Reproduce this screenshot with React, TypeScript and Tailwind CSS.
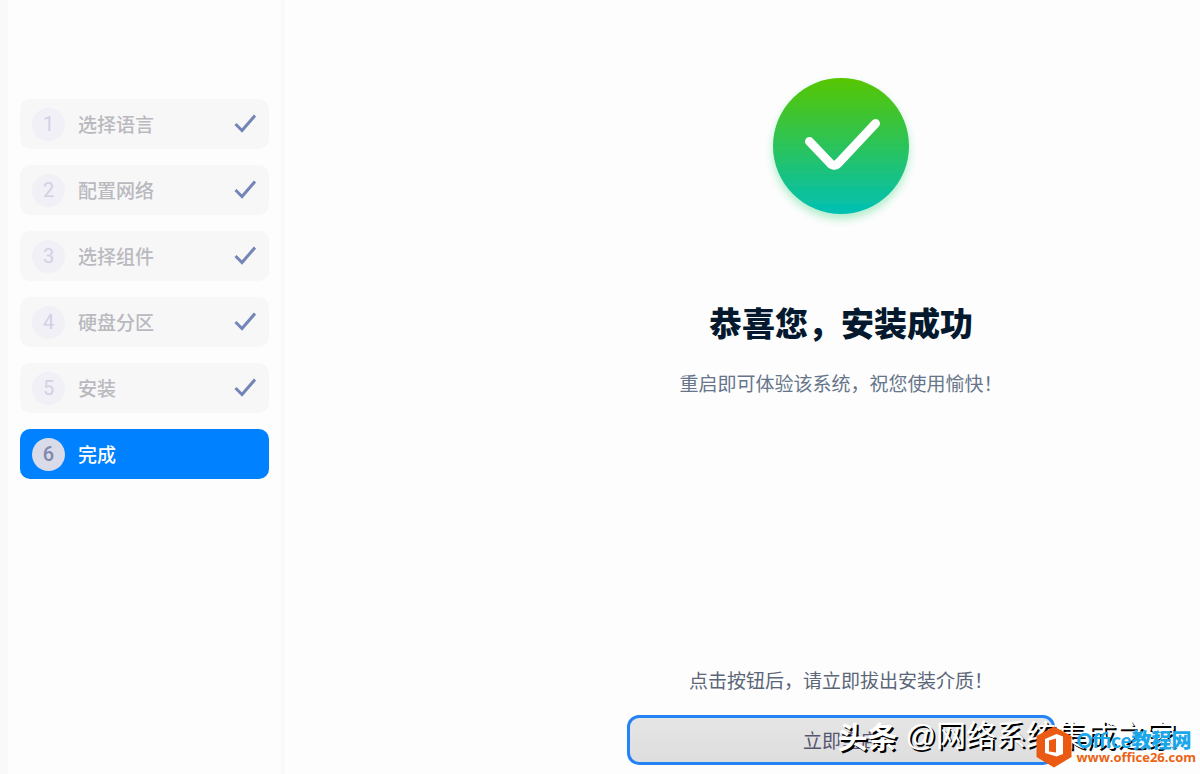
const steps = ["选择语言", "配置网络", "选择组件", "硬盘分区", "安装", "完成"];

function StepCheck() {
  return (
    <svg viewBox="0 0 24 20" className="ml-auto h-5 w-6" fill="none" aria-hidden="true">
      <path d="M2.5 10 L9 16.500 L22 1.500" stroke="#7486b8" strokeWidth="3" />
    </svg>
  );
}

function Step({ label, number, active }: { label: string; number: number; active: boolean }) {
  return (
    <li
      aria-current={active ? "step" : undefined}
      className={
        active
          ? "flex h-[50px] items-center rounded-[10px] bg-[#0081ff] px-3 text-white"
          : "flex h-[50px] items-center rounded-[10px] bg-[#f7f7f7] px-3 text-[#b9b9bf]"
      }
    >
      <span
        className={
          active
            ? "flex size-[33px] items-center justify-center rounded-full bg-[#d9dbe8] font-[Roboto,sans-serif] text-xl font-medium text-[#8088ac]"
            : "flex size-[33px] items-center justify-center rounded-full bg-[#f0f0f6] font-[Roboto,sans-serif] text-xl text-[#d0d0e6]"
        }
      >
        {number}
      </span>
      <span className="ml-[13px] text-[19px] font-medium">{label}</span>
      {!active && <StepCheck />}
    </li>
  );
}

function SuccessIcon() {
  return (
    <svg viewBox="0 0 160 160" className="size-40" fill="none" aria-hidden="true">
      <defs>
        <linearGradient id="success-fill" x1="0" y1="0" x2="0" y2="1">
          <stop offset="0" stopColor="#56c600" />
          <stop offset="1" stopColor="#00c0b5" />
        </linearGradient>
        <filter id="success-shadow" x="-20%" y="-20%" width="140%" height="140%">
          <feDropShadow dx="0" dy="5" stdDeviation="4" floodColor="#35d47a" floodOpacity="0.4" />
        </filter>
      </defs>
      <circle cx="80" cy="78" r="68" fill="url(#success-fill)" filter="url(#success-shadow)" />
      <path
        d="M48.5 73.5 L69 95 Q73 99.500 77.500 95 L114.500 55.500"
        stroke="#fff"
        strokeWidth="9"
        strokeLinecap="round"
        strokeLinejoin="round"
      />
    </svg>
  );
}

function OfficeMark() {
  return (
    <svg viewBox="0 0 36 42" className="h-[42px] w-9" aria-hidden="true">
      <path d="M18 0.500 L35.500 10 V31 L18 41.500 L0.500 31 V10 Z" fill="#eb5a13" />
      <path
        d="M9 13 L20.500 8 L27 10.500 V28 L20.500 30.500 L9 27 Z M13 14.500 V25.500 L20 26.500 V12.500 Z"
        fill="#fff"
        fillRule="evenodd"
      />
    </svg>
  );
}

export default function App() {
  return (
    <div className="relative flex min-h-screen overflow-hidden bg-[#fdfdfd] font-['Noto_Sans_CJK_SC',sans-serif]">
      <aside className="w-[285px] shrink-0 border-r-4 border-l-8 border-[#f9f9f9] px-3 pt-[99px]">
        <ol className="flex flex-col gap-4">
          {steps.map((label, i) => (
            <Step key={label} label={label} number={i + 1} active={i === steps.length - 1} />
          ))}
        </ol>
      </aside>

      <main className="flex flex-1 flex-col items-center pt-[68px] pb-[9px] pl-[197px]">
        <SuccessIcon />
        <h1 className="mt-[69px] text-[33px] leading-[50px] font-black text-[#04192e]">恭喜您，安装成功</h1>
        <p className="mt-[21px] text-[19px] leading-[30px] text-[#66758a]">重启即可体验该系统，祝您使用愉快！</p>
        <p className="mt-auto text-[19px] leading-[30px] text-[#5b6678]">点击按钮后，请立即拔出安装介质！</p>
        <button
          type="button"
          className="mt-5 h-[50px] w-[428px] rounded-xl border-3 border-[#2484f5] bg-linear-to-b from-[#e5e5e5] to-[#dedede] text-[19px] text-[#55556f]"
        >
          立即重启
        </button>
      </main>

      <div className="pointer-events-none absolute right-6 bottom-4 flex items-center gap-2 text-[30px] leading-[44px] whitespace-nowrap text-white [text-shadow:2px_2px_0_#000]">
        <span className="font-bold">头条</span>
        <span>
          <span className="font-['Liberation_Sans',sans-serif]">@</span>网络系统集成之家
        </span>
      </div>
      <div className="pointer-events-none absolute right-1 bottom-1.5 flex items-center gap-1">
        <OfficeMark />
        <div className="flex flex-col whitespace-nowrap">
          <span className="font-[Lato,'Noto_Sans_CJK_SC',sans-serif] text-xl leading-5 font-black text-[#1ba8ea]">
            Office教程网
          </span>
          <a
            href="https://www.office26.com"
            className="font-['Open_Sans',sans-serif] text-[13px] leading-[14px] font-bold text-[#eb6314]"
          >
            www.office26.com
          </a>
        </div>
      </div>
    </div>
  );
}
